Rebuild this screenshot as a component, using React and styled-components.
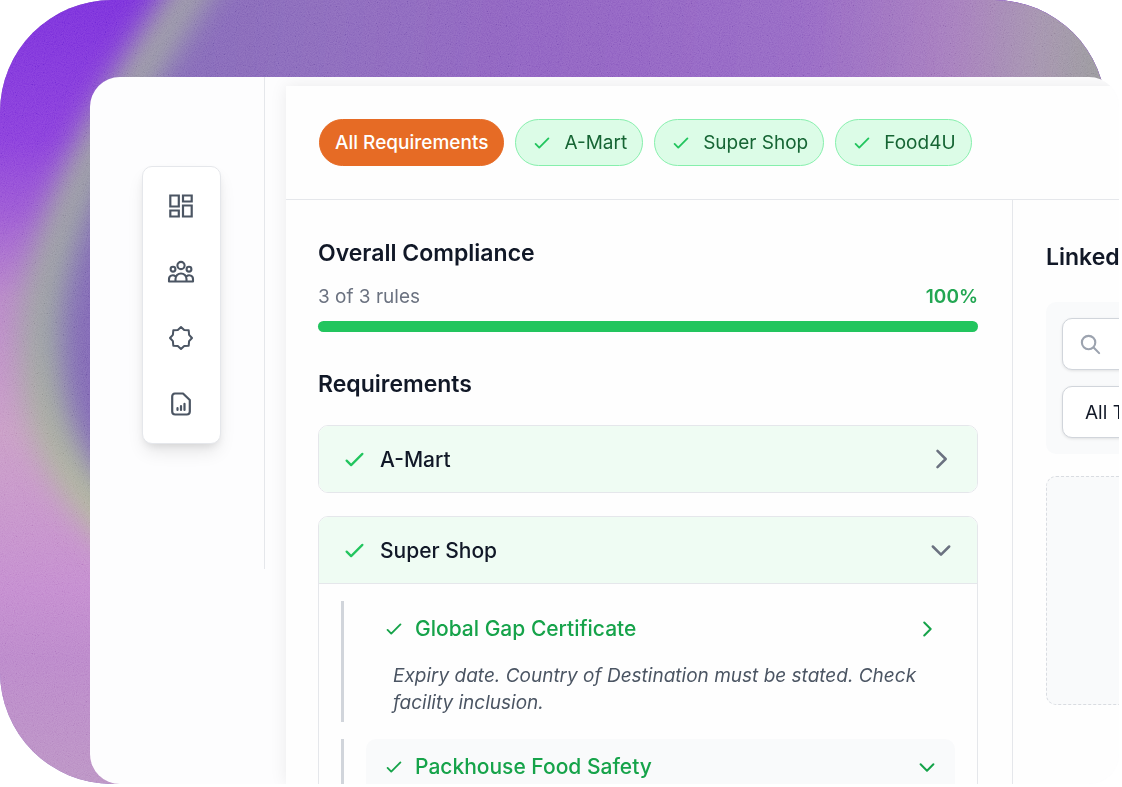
import React from "react";
import styled, { createGlobalStyle, css } from "styled-components";

const Global = createGlobalStyle`
  *, *::before, *::after { box-sizing: border-box; }
  body { margin: 0; background: #fff; font-family: Inter, "Liberation Sans", sans-serif; color: #111827; }
  h1, h2, h3, p { margin: 0; }
  button, input, select { font: inherit; color: inherit; }
  button { cursor: pointer; }
`;

const Scene = styled.div`
  position: relative;
  display: grid;
  height: calc(100vh - 3px);
  min-height: 480px;
  margin-right: 3px;
  padding: 77px 0 0 90px;
  overflow: hidden;
`;

const Backdrop = styled.div`
  position: absolute;
  inset: 0 13px 0 0;
  border-radius: 112px;
  overflow: hidden;
  background: #936fc1;
  svg { display: block; width: 100%; height: 100%; }
`;

const Panel = styled.div`
  position: relative;
  display: grid;
  grid-template-columns: 175px minmax(0, 1fr);
  min-height: 0;
  background: #fdfdfe;
  border-radius: 30px;
  overflow: hidden;
`;

const Sidebar = styled.aside`
  display: flex;
  justify-content: center;
  align-items: flex-start;
  padding: 89px 0 0 8px;
  height: 492px;
  border-right: 1px solid #e5e7eb;
`;

const Nav = styled.nav`
  display: flex;
  flex-direction: column;
  justify-content: space-between;
  width: 79px;
  height: 278px;
  padding: 18px;
  background: #fff;
  border: 1px solid #e5e7eb;
  border-radius: 10px;
  box-shadow: 0 10px 18px -3px rgba(0, 0, 0, 0.1), 0 4px 8px -3px rgba(0, 0, 0, 0.1);
`;

const NavButton = styled.button`
  display: grid;
  place-items: center;
  height: 42px;
  padding: 0;
  border: 0;
  background: none;
  color: #4b5563;
  svg { width: 28px; height: 28px; }
`;

const Main = styled.main`
  display: flex;
  flex-direction: column;
  min-height: 0;
  margin: 9px 0 0 21px;
  background: #fefefe;
  box-shadow: 0 0 16px rgba(0, 0, 0, 0.08);
`;

const Tabs = styled.div`
  display: flex;
  flex: none;
  gap: 11px;
  padding: 33px;
  border-bottom: 1px solid #e5e7eb;
`;

const Tab = styled.button`
  display: flex;
  align-items: center;
  gap: 11px;
  height: 47px;
  padding: 0 15px;
  border: 1px solid #86efac;
  border-radius: 24px;
  background: #dcfce7;
  color: #166534;
  font-size: 19px;
  white-space: nowrap;
  ${(p) => p.$active && css`
    border-color: #e66b25;
    background: #e66b25;
    color: #fff;
    font-weight: 500;
  `}
`;

const Columns = styled.div`
  display: grid;
  grid-template-columns: minmax(0, 727px) 1fr;
  flex: 1;
  min-height: 0;
`;

const Compliance = styled.section`
  min-width: 0;
  padding: 35px 34px 0 32px;
  border-right: 1px solid #e5e7eb;
`;

const Heading = styled.h2`
  font-size: 23px;
  line-height: 36px;
  font-weight: 600;
  white-space: nowrap;
`;

const Score = styled.div`
  display: flex;
  justify-content: space-between;
  margin-top: 12px;
  font-size: 19px;
  line-height: 28px;
  color: #6b7280;
  strong { font-weight: 600; color: #22a652; }
`;

const Track = styled.div`
  height: 11px;
  margin: 10px 0 34px;
  border-radius: 6px;
  background: #e5e7eb;
`;

const Fill = styled.div`
  height: 100%;
  border-radius: 6px;
  background: #22c55e;
`;

const Group = styled.article`
  margin-top: 23px;
  border: 1px solid #e5e7eb;
  border-radius: 10px;
  overflow: hidden;
`;

const GroupButton = styled.button`
  display: flex;
  align-items: center;
  gap: 12px;
  width: 100%;
  height: 66px;
  padding: 0 22px;
  border: 0;
  background: #effcf3;
  font-size: 21px;
  font-weight: 500;
  text-align: left;
  svg:last-child { margin-left: auto; color: #6b7280; }
`;

const Rules = styled.div`
  display: grid;
  gap: 17px;
  padding: 17px 22px;
  border-top: 1px solid #e5e7eb;
`;

const Rule = styled.div`
  min-height: 121px;
  padding-left: 22px;
  border-left: 3px solid #d1d5db;
`;

const RuleButton = styled.button`
  display: flex;
  align-items: center;
  gap: 10px;
  width: 100%;
  height: 55px;
  padding: 0 17px;
  border: 0;
  border-radius: 10px;
  background: ${(p) => (p.$open ? "#f9fafb" : "none")};
  color: #16a34a;
  font-size: 21px;
  font-weight: 500;
  text-align: left;
  svg:last-child { margin-left: auto; }
`;

const RuleText = styled.p`
  padding: 6px 20px 0 27px;
  font-size: 19px;
  line-height: 27px;
  font-style: italic;
  color: #4b5563;
`;

const Linked = styled.section`
  min-width: 0;
  padding: 39px 0 0 33px;
  overflow: hidden;
`;

const Filters = styled.div`
  display: grid;
  gap: 16px;
  width: 320px;
  margin-top: 27px;
  padding: 16px;
  border-radius: 10px;
  background: #f9fafb;
`;

const Field = styled.label`
  display: flex;
  align-items: center;
  gap: 16px;
  height: 52px;
  padding: 0 16px;
  border: 1px solid #d1d5db;
  border-radius: 10px;
  background: #fff;
  box-shadow: 0 1px 3px rgba(0, 0, 0, 0.1);
  font-size: 19px;
  svg { flex: none; color: #9ca3af; }
`;

const SearchInput = styled.input`
  width: 100%;
  padding: 0;
  border: 0;
  background: none;
  outline: 0;
  &::placeholder { color: #9ca3af; }
`;

const TypeSelect = styled.select`
  appearance: none;
  width: 100%;
  padding: 0 6px;
  border: 0;
  background: none;
`;

const DropZone = styled.div`
  width: 320px;
  height: 229px;
  margin-top: 22px;
  border: 1px dashed #d9dce1;
  border-radius: 10px;
  background: #f9fafb;
`;

const Grain = styled.rect`
  mix-blend-mode: soft-light;
`;

const iconProps = { fill: "none", stroke: "currentColor", strokeLinecap: "round", strokeLinejoin: "round", "aria-hidden": true };

const Check = ({ size, color = "currentColor", weight = 2 }) => (
  <svg width={size} height={size} viewBox="0 0 24 24" {...iconProps} stroke={color} strokeWidth={weight}>
    <path d="M5 13l4 4L19 7" />
  </svg>
);

const Chevron = ({ size, down }) => (
  <svg width={size} height={size} viewBox="0 0 24 24" {...iconProps} strokeWidth={2.2}>
    <path d={down ? "M5 9l7 7 7-7" : "M9 5l7 7-7 7"} />
  </svg>
);

const DashboardIcon = () => (
  <svg viewBox="0 0 28 28" {...iconProps} strokeWidth="2.2" strokeLinejoin="miter">
    <path d="M3.300 3.500h8.500v11H3.300zM16 3.500h8.700v6H16zM3.300 18.500h8.500v6H3.300zM16 13.500h8.700v11H16z" />
  </svg>
);

const PeopleIcon = () => (
  <svg viewBox="0 0 28 28" {...iconProps} strokeWidth="2.100">
    <circle cx="14" cy="7.500" r="3.600" />
    <circle cx="6" cy="11.200" r="2.400" />
    <circle cx="22" cy="11.200" r="2.400" />
    <path d="M8.500 23.500v-2.500a5.500 5.500 0 0 1 11 0v2.500M8.300 18.200a3.800 3.800 0 0 0-6.300 3v2.300h24v-2.300a3.800 3.800 0 0 0-6.300-3" />
  </svg>
);

const BadgeIcon = () => (
  <svg viewBox="0 0 28 28" {...iconProps} strokeWidth="2">
    <path d="M14 3l3.200 2.900 4.500.4.400 4.500L25 14l-2.900 3.200-.4 4.500-4.500.4L14 25l-3.200-2.900-4.500-.4-.4-4.500L3 14l2.900-3.200.4-4.500 4.500-.4z" />
  </svg>
);

const ReportIcon = () => (
  <svg viewBox="0 0 28 28" {...iconProps} strokeWidth="2.200">
    <path d="M8 3.500h8L22.800 10v11.500a3 3 0 0 1-3 3H8.200a3 3 0 0 1-3-3V6.500A3 3 0 0 1 8 3.500z" />
    <path d="M10.500 20v-1.800M14 20v-4M17.500 20v-6.200" />
  </svg>
);

const SearchIcon = () => (
  <svg width="23" height="23" viewBox="0 0 24 24" {...iconProps} strokeWidth="2.200">
    <circle cx="10" cy="10" r="7" />
    <path d="M15.500 15.500L21 21" />
  </svg>
);

const Artwork = () => (
  <svg viewBox="0 0 1107 784" preserveAspectRatio="none" aria-hidden="true">
    <defs>
      <linearGradient id="outer" x1="0" y1="0" x2="0" y2="1">
        <stop offset="0" stopColor="#7c30dc" />
        <stop offset="0.18" stopColor="#8b3edc" />
        <stop offset="0.27" stopColor="#9c58d4" />
        <stop offset="0.38" stopColor="#b886c8" />
        <stop offset="0.55" stopColor="#c99dc6" />
        <stop offset="0.75" stopColor="#c48ccf" />
        <stop offset="0.84" stopColor="#bb88ca" />
        <stop offset="1" stopColor="#bb93c4" />
      </linearGradient>
      <linearGradient id="inner" gradientUnits="userSpaceOnUse" x1="80" y1="0" x2="1110" y2="90">
        <stop offset="0" stopColor="#8068b4" />
        <stop offset="0.25" stopColor="#8c6abc" />
        <stop offset="0.45" stopColor="#9062c2" />
        <stop offset="0.7" stopColor="#9668c4" />
        <stop offset="0.84" stopColor="#a67cbe" />
        <stop offset="0.93" stopColor="#a594ae" />
        <stop offset="1" stopColor="#989a9a" />
      </linearGradient>
      <linearGradient id="band" gradientUnits="userSpaceOnUse" x1="0" y1="0" x2="0" y2="560">
        <stop offset="0" stopColor="#9c9ca4" />
        <stop offset="0.6" stopColor="#9ca4a0" />
        <stop offset="1" stopColor="#b6bc9a" />
      </linearGradient>
      <filter id="soft" filterUnits="userSpaceOnUse" x="-100" y="-100" width="1400" height="900">
        <feGaussianBlur stdDeviation="14" />
      </filter>
      <filter id="grain" x="0" y="0" width="100%" height="100%">
        <feTurbulence type="fractalNoise" baseFrequency="0.9" numOctaves="2" />
        <feColorMatrix values="1.500 0 0 0 -0.250  1.500 0 0 0 -0.250  1.500 0 0 0 -0.250  0 0 0 0 1" />
      </filter>
    </defs>
    <rect width="1107" height="784" fill="url(#outer)" />
    <g filter="url(#soft)">
      <path d="M215-60C120 50 40 200 40 340C40 420 65 480 120 540H1250V-60z" fill="url(#inner)" />
      <path d="M220-60C155 50 46 190 40 330C38 410 54 475 130 540" fill="none" stroke="url(#band)" strokeWidth="38" />
    </g>
    <Grain width="1107" height="784" filter="url(#grain)" opacity="0.25" />
  </svg>
);

const markets = ["A-Mart", "Super Shop", "Food4U"];

export default function App() {
  return (
    <>
      <Global />
      <Scene>
        <Backdrop><Artwork /></Backdrop>
        <Panel>
          <Sidebar>
            <Nav aria-label="Main">
              <NavButton aria-label="Dashboard"><DashboardIcon /></NavButton>
              <NavButton aria-label="Suppliers"><PeopleIcon /></NavButton>
              <NavButton aria-label="Certificates"><BadgeIcon /></NavButton>
              <NavButton aria-label="Reports"><ReportIcon /></NavButton>
            </Nav>
          </Sidebar>
          <Main>
            <Tabs>
              <Tab $active>All Requirements</Tab>
              {markets.map((name) => (
                <Tab key={name}><Check size={22} color="#22c55e" />{name}</Tab>
              ))}
            </Tabs>
            <Columns>
              <Compliance>
                <Heading>Overall Compliance</Heading>
                <Score><span>3 of 3 rules</span><strong>100%</strong></Score>
                <Track><Fill style={{ width: "100%" }} /></Track>
                <Heading>Requirements</Heading>
                <Group>
                  <GroupButton aria-expanded="false">
                    <Check size={27} color="#22c55e" />A-Mart<Chevron size={28} />
                  </GroupButton>
                </Group>
                <Group>
                  <GroupButton aria-expanded="true">
                    <Check size={27} color="#22c55e" />Super Shop<Chevron size={28} down />
                  </GroupButton>
                  <Rules>
                    <Rule>
                      <RuleButton aria-expanded="false">
                        <Check size={22} />Global Gap Certificate<Chevron size={22} />
                      </RuleButton>
                      <RuleText>Expiry date. Country of Destination must be stated. Check facility inclusion.</RuleText>
                    </Rule>
                    <Rule>
                      <RuleButton $open aria-expanded="true">
                        <Check size={22} />Packhouse Food Safety<Chevron size={22} down />
                      </RuleButton>
                    </Rule>
                  </Rules>
                </Group>
              </Compliance>
              <Linked>
                <Heading>Linked</Heading>
                <Filters>
                  <Field><SearchIcon /><SearchInput type="search" placeholder="Search" aria-label="Search" /></Field>
                  <Field><TypeSelect aria-label="Type"><option>All Types</option></TypeSelect></Field>
                </Filters>
                <DropZone />
              </Linked>
            </Columns>
          </Main>
        </Panel>
      </Scene>
    </>
  );
}
